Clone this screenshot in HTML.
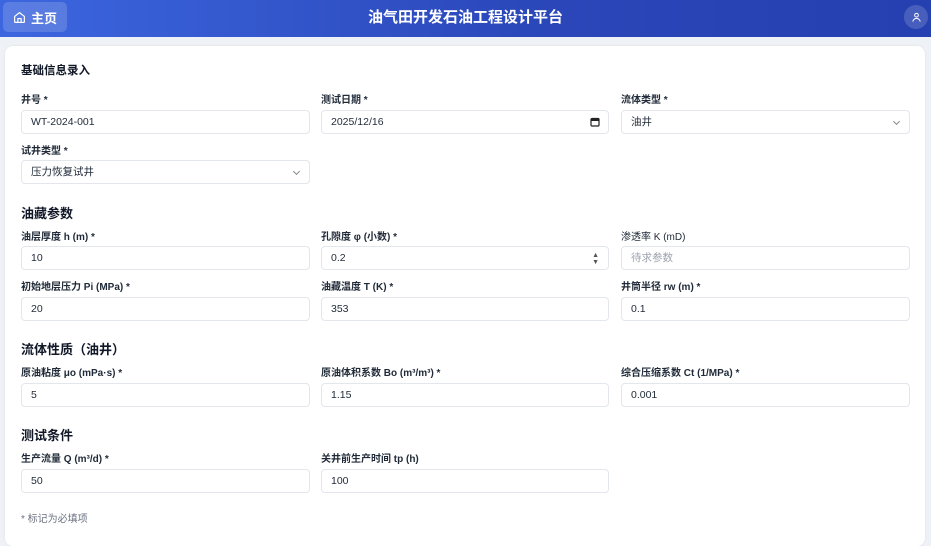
<!DOCTYPE html>
<html><head><meta charset="utf-8"><style>
*{box-sizing:border-box;margin:0;padding:0}
body{width:931px;height:524px;overflow:hidden;background:#eef1f5;font-family:"Liberation Sans","Noto Sans CJK SC",sans-serif;color:#1f2937;position:relative}
.hdr{position:absolute;left:0;top:0;width:931px;height:37px;background:linear-gradient(90deg,#3c66df,#2a46b8 60%,#2540b0);}
.home{position:absolute;left:3px;top:2px;width:64px;height:30px;border-radius:5px;background:rgba(255,255,255,.16);color:#fff;font-size:13px;font-weight:bold;display:flex;align-items:center;justify-content:center;gap:5px}
.title{position:absolute;left:0;width:931px;top:0;height:37px;line-height:36px;text-align:center;color:#fff;font-size:15px;font-weight:bold}
.av{position:absolute;left:904px;top:5px;width:24px;height:24px;border-radius:50%;background:rgba(255,255,255,.16);display:flex;align-items:center;justify-content:center}
.card{position:absolute;left:5px;top:46px;width:920px;height:500px;background:#fff;border-radius:8px;box-shadow:0 0 2px rgba(0,0,0,.08)}
.h{position:absolute;left:21px;font-weight:bold;color:#111827}
.l{position:absolute;font-size:10px;font-weight:bold;color:#1f2937;line-height:12px;margin-top:2px}
.i{position:absolute;width:289px;height:24px;border:1px solid #e3e6ea;border-radius:4px;background:#fff;font-size:10.5px;line-height:22px;padding-left:9px;color:#1f2937}
.ph{color:#9ca3af}
.c{position:absolute;right:10px;top:8px;width:5px;height:5px;border-right:1px solid #888;border-bottom:1px solid #888;transform:rotate(45deg)}
</style></head><body>
<div class="hdr"></div>
<div class="home"><svg width="13" height="13" viewBox="0 0 24 24" fill="none" stroke="#fff" stroke-width="2.2" stroke-linejoin="round"><path d="M3 10l9-7 9 7v10a1 1 0 0 1-1 1H4a1 1 0 0 1-1-1z"/><path d="M9 21v-7h6v7"/></svg>主页</div>
<div class="title">油气田开发石油工程设计平台</div>
<div class="av"><svg width="11" height="11" viewBox="0 0 24 24" fill="none" stroke="#fff" stroke-width="2.2"><circle cx="12" cy="7" r="4"/><path d="M4 21c0-4 4-7 8-7s8 3 8 7"/></svg></div>
<div class="card"></div>

<div class="h" style="top:62px;font-size:11.5px">基础信息录入</div>
<div class="l" style="left:21px;top:93px">井号 *</div>
<div class="i" style="left:21px;top:110px">WT-2024-001</div>
<div class="l" style="left:321px;top:93px">测试日期 *</div>
<div class="i" style="left:321px;top:110px;width:288px">2025/12/16<svg style="position:absolute;right:8px;top:6px" width="10" height="10" viewBox="0 0 10 10"><rect x="1" y="1.5" width="8" height="7.5" rx="1" fill="none" stroke="#222" stroke-width="1.2"/><rect x="1" y="1.5" width="8" height="2.5" fill="#222"/></svg></div>
<div class="l" style="left:621px;top:93px">流体类型 *</div>
<div class="i" style="left:621px;top:110px">油井<span class="c"></span></div>
<div class="l" style="left:21px;top:144px">试井类型 *</div>
<div class="i" style="left:21px;top:160px">压力恢复试井<span class="c"></span></div>

<div class="h" style="top:203px;font-size:13px">油藏参数</div>
<div class="l" style="left:21px;top:230px">油层厚度 h (m) *</div>
<div class="i" style="left:21px;top:246px">10</div>
<div class="l" style="left:321px;top:230px">孔隙度 φ (小数) *</div>
<div class="i" style="left:321px;top:246px;width:288px">0.2<span style="position:absolute;right:9px;top:0;font-size:7px;line-height:7px;color:#555;padding-top:5px">▲<br>▼</span></div>
<div class="l" style="left:621px;top:230px;font-weight:normal">渗透率 K (mD)</div>
<div class="i ph" style="left:621px;top:246px">待求参数</div>
<div class="l" style="left:21px;top:280px">初始地层压力 Pi (MPa) *</div>
<div class="i" style="left:21px;top:297px">20</div>
<div class="l" style="left:321px;top:280px">油藏温度 T (K) *</div>
<div class="i" style="left:321px;top:297px;width:288px">353</div>
<div class="l" style="left:621px;top:280px">井筒半径 rw (m) *</div>
<div class="i" style="left:621px;top:297px">0.1</div>

<div class="h" style="top:339px;font-size:13px">流体性质（油井）</div>
<div class="l" style="left:21px;top:366px">原油粘度 μo (mPa·s) *</div>
<div class="i" style="left:21px;top:383px">5</div>
<div class="l" style="left:321px;top:366px">原油体积系数 Bo (m³/m³) *</div>
<div class="i" style="left:321px;top:383px;width:288px">1.15</div>
<div class="l" style="left:621px;top:366px">综合压缩系数 Ct (1/MPa) *</div>
<div class="i" style="left:621px;top:383px">0.001</div>

<div class="h" style="top:425px;font-size:13px">测试条件</div>
<div class="l" style="left:21px;top:452px">生产流量 Q (m³/d) *</div>
<div class="i" style="left:21px;top:469px">50</div>
<div class="l" style="left:321px;top:452px">关井前生产时间 tp (h)</div>
<div class="i" style="left:321px;top:469px;width:288px">100</div>

<div style="position:absolute;left:21px;top:510px;font-size:10px;color:#6b7280">* 标记为必填项</div>
</body></html>
